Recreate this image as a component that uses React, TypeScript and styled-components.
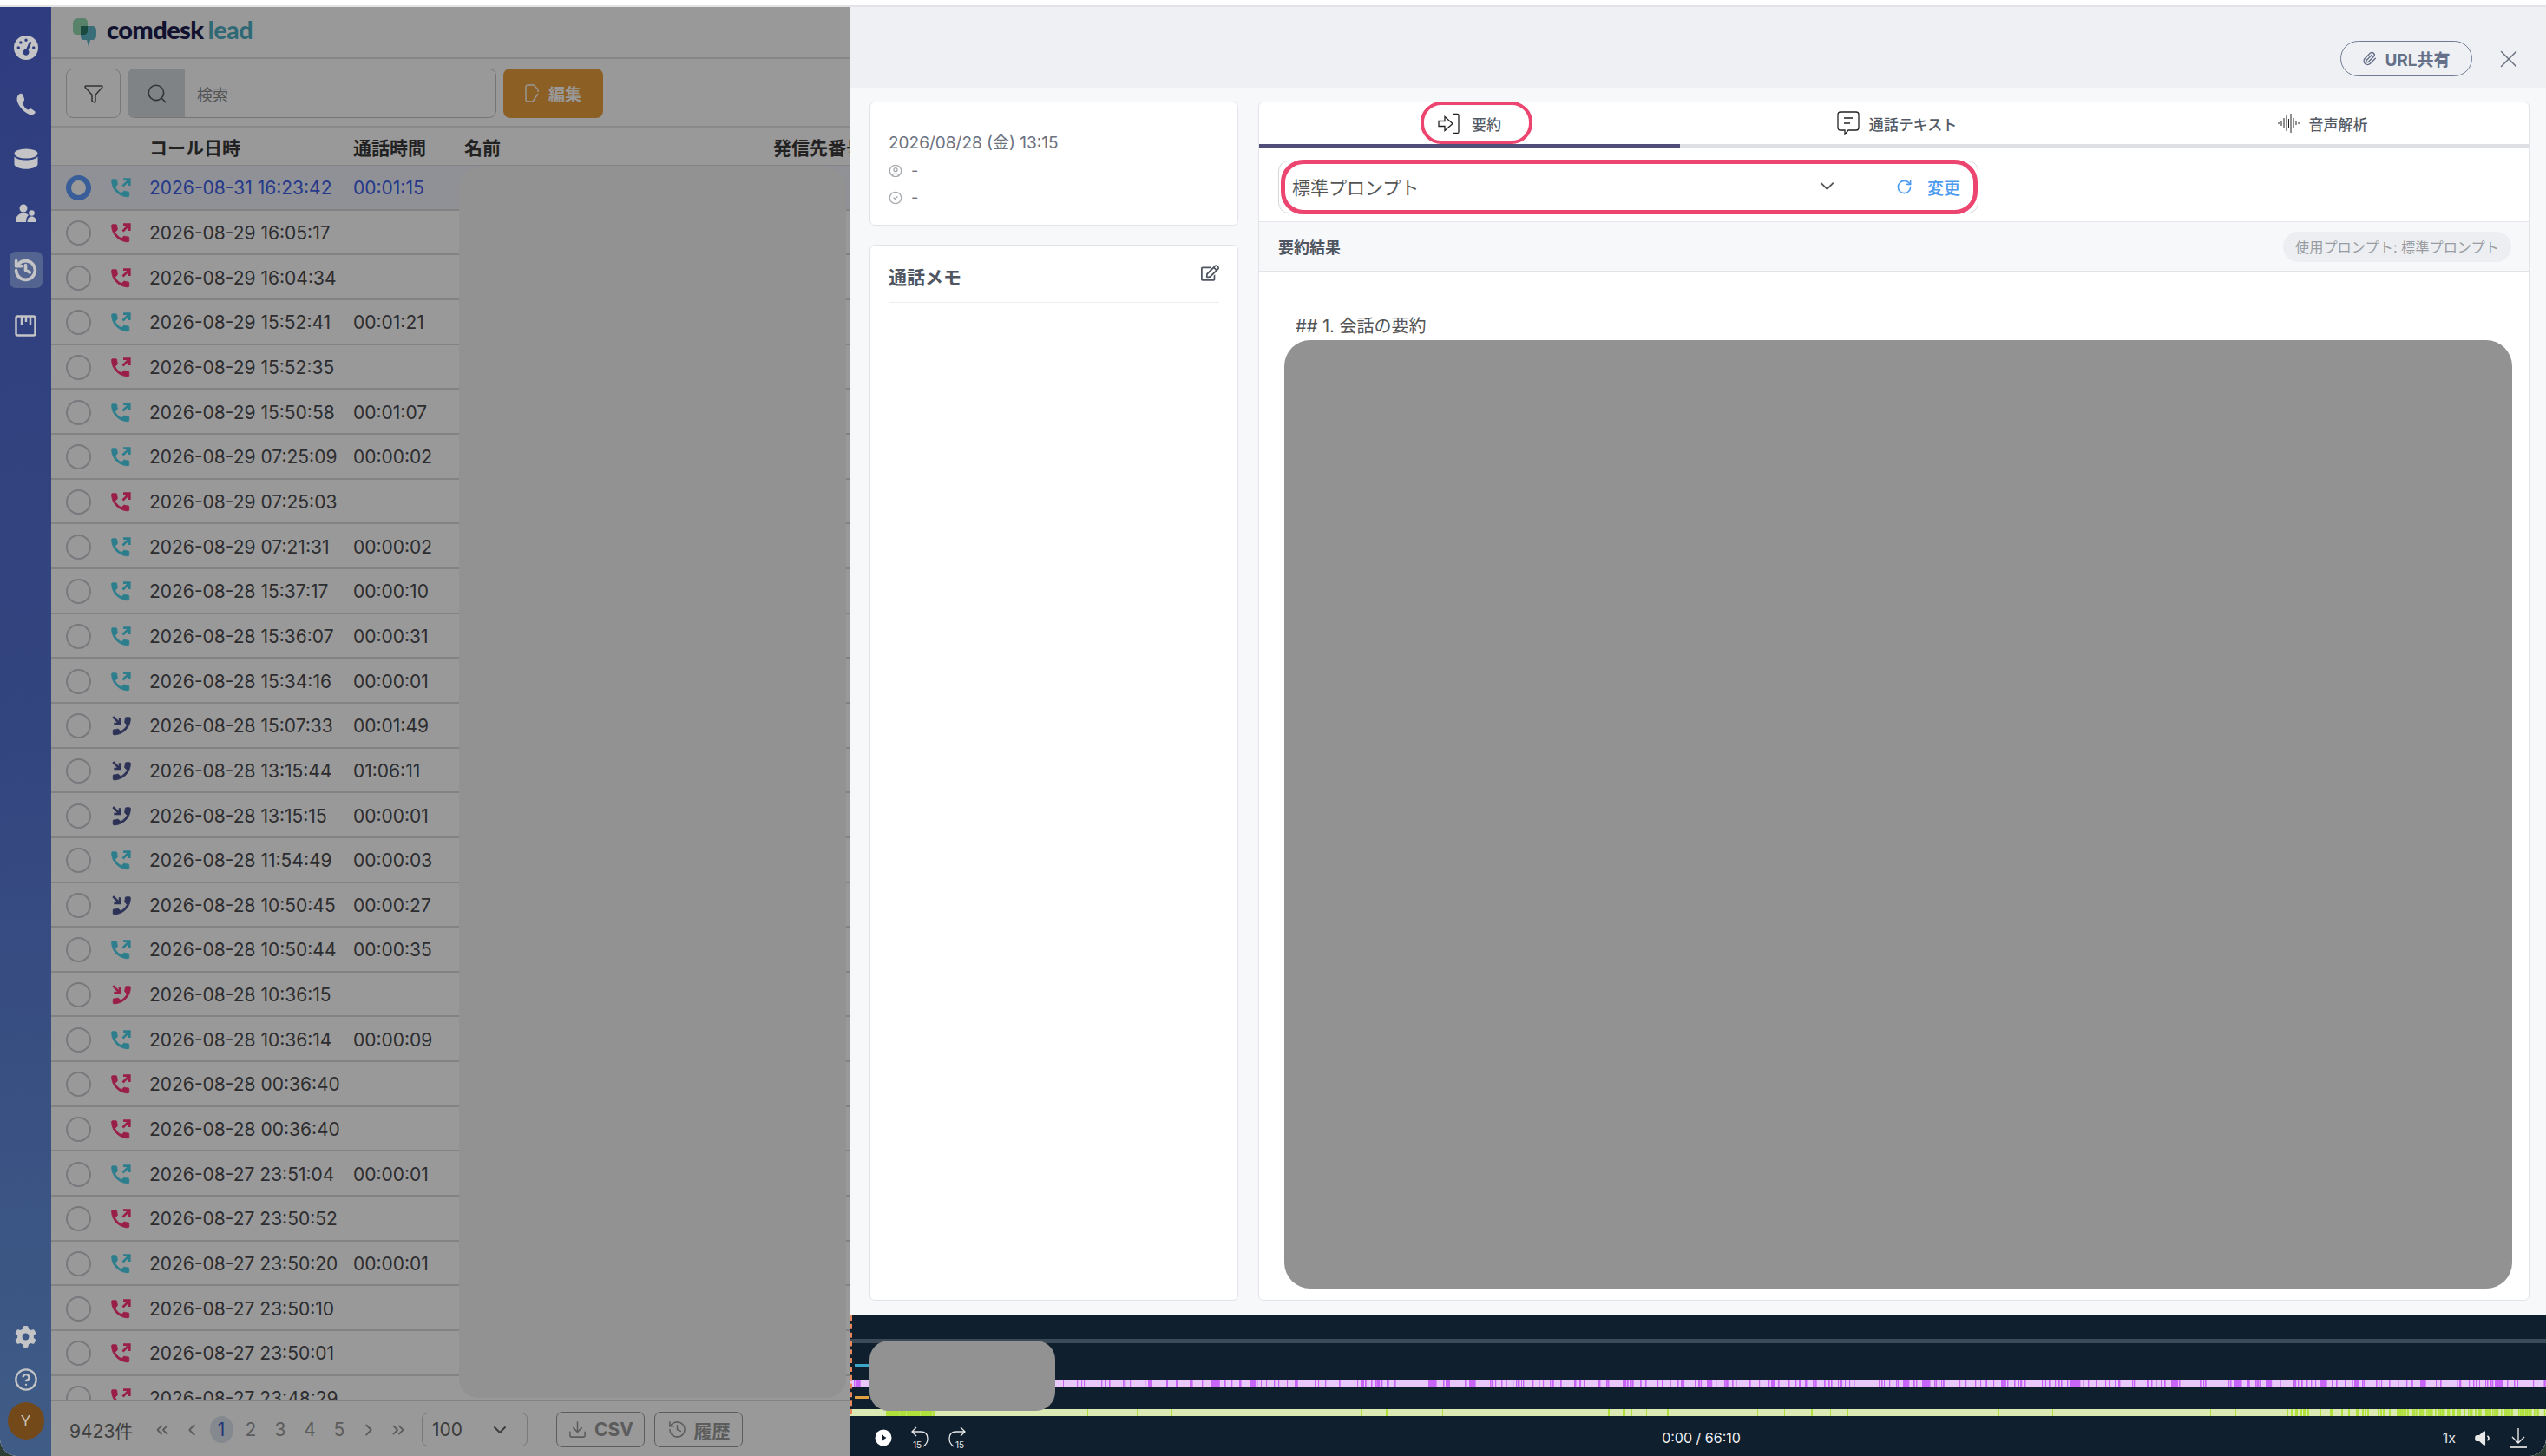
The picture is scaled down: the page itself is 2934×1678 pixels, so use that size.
import React from 'react';
import styled, { createGlobalStyle } from 'styled-components';
import {
  ChevronDown,
  ChevronLeft,
  ChevronRight,
  ChevronsLeft,
  ChevronsRight,
  CircleCheck,
  CircleHelp,
  CircleUser,
  Download,
  Filter,
  History,
  Paperclip,
  RotateCw,
  Search,
  X,
} from 'lucide-react';
import { FaGaugeHigh, FaGear, FaVolumeLow } from 'react-icons/fa6';
import { FaRegEdit } from 'react-icons/fa';

const FONT = `Inter, "Noto Sans CJK JP", sans-serif`;

const GlobalStyle = createGlobalStyle`
  html, body { margin: 0; padding: 0; background: #2e3f36; }
  body { font-family: ${FONT}; }
  * { box-sizing: border-box; }
`;

const Page = styled.div`
  width: 2934px;
  height: 1678px;
  display: flex;
  flex-direction: column;
  overflow: hidden;
  border-radius: 0 0 20px 20px;
  background: #fff;
`;

const TopStrip = styled.div`
  height: 8px;
  flex: none;
  background: #fff;
  border-bottom: 2px solid #e2e3e5;
`;

const Body = styled.div`
  flex: 1;
  display: flex;
  min-height: 0;
`;

/* sidebar */
const Sidebar = styled.nav`
  width: 59px;
  flex: none;
  display: flex;
  flex-direction: column;
  align-items: center;
  padding-top: 26px;
  padding-bottom: 19px;
  background: linear-gradient(180deg, #2f3d80 0%, #33457f 50%, #3f5c86 100%);
  color: #c4c4c6;
`;

const NavItem = styled.div<{ $active?: boolean }>`
  width: 38px;
  height: 42px;
  margin-bottom: 22px;
  display: flex;
  align-items: center;
  justify-content: center;
  border-radius: 7px;
  background: ${(p) => (p.$active ? '#52648f' : 'transparent')};
`;

const NavSpacer = styled.div`
  flex: 1;
`;

const BottomNavItem = styled.div`
  height: 49px;
  display: flex;
  align-items: center;
  justify-content: center;
`;

const Avatar = styled.div`
  width: 42px;
  height: 43px;
  margin-top: 2px;
  border-radius: 50%;
  background: #74491a;
  color: #c8c0b0;
  font-size: 17px;
  display: flex;
  align-items: center;
  justify-content: center;
`;

/* list pane */
const ListPane = styled.section`
  width: 921px;
  flex: none;
  position: relative;
  display: flex;
  flex-direction: column;
  overflow: hidden;
  background: #fff;
`;

const Dim = styled.div`
  position: absolute;
  inset: 0;
  z-index: 1;
  background: rgba(0, 0, 0, 0.4);
`;

const LogoBar = styled.header`
  height: 60px;
  flex: none;
  display: flex;
  align-items: center;
  padding: 0 0 8px 23px;
  gap: 11px;
  border-bottom: 2px solid #e2e2e2;
  svg { margin-top: 8px; }
`;

const LogoText = styled.div`
  font-family: Lato, ${FONT};
  font-size: 29px;
  font-weight: 900;
  letter-spacing: -0.6px;
  color: #1e1e4e;
  display: flex;
  gap: 5px;
`;

const LogoLead = styled.span`
  color: #4fb0c4;
  font-weight: 700;
`;

const Toolbar = styled.div`
  height: 80px;
  flex: none;
  display: flex;
  align-items: flex-start;
  gap: 8px;
  padding: 11px 0 0 17px;
  border-bottom: 3px solid #e6e6e6;
`;

const FilterButton = styled.div`
  width: 63px;
  height: 57px;
  border: 1px solid #c8c8c8;
  border-radius: 8px;
  display: flex;
  align-items: center;
  justify-content: center;
  color: #555;
`;

const SearchBox = styled.div`
  width: 425px;
  height: 57px;
  border: 1px solid #c4c4c4;
  border-radius: 8px;
  display: flex;
  overflow: hidden;
`;

const SearchPrefix = styled.div`
  width: 65px;
  background: #d6dbe0;
  display: flex;
  align-items: center;
  justify-content: center;
  color: #555;
`;

const SearchPlaceholder = styled.div`
  padding-left: 14px;
  display: flex;
  align-items: center;
  font-size: 18px;
  color: #8a8a8a;
`;

const EditButton = styled.div`
  width: 115px;
  height: 57px;
  border-radius: 8px;
  background: #ea9f3f;
  color: #fff;
  display: flex;
  align-items: center;
  justify-content: center;
  gap: 10px;
  font-size: 19px;
  font-weight: 700;
`;

const gridColumns = '69px 44px 235px 128px 356px 1fr';

const HeaderRow = styled.div`
  height: 43px;
  flex: none;
  display: grid;
  grid-template-columns: ${gridColumns};
  align-items: center;
  font-size: 21px;
  font-weight: 700;
  color: #3a3a3a;
  white-space: nowrap;
  border-bottom: 1px solid #dcdcdc;
`;

const ListBody = styled.div`
  flex: 1;
  position: relative;
  overflow: hidden;
  min-height: 0;
`;

const Row = styled.div<{ $selected?: boolean }>`
  height: 51.67px;
  padding-top: 2px;
  display: grid;
  grid-template-columns: ${gridColumns};
  align-items: center;
  font-size: 21px;
  white-space: nowrap;
  color: ${(p) => (p.$selected ? '#4060e6' : '#4c4c50')};
  background: ${(p) => (p.$selected ? '#eef2fa' : '#fff')};
  border-bottom: 2px solid #dadada;
`;

const Radio = styled.div<{ $selected?: boolean }>`
  margin-left: 17px;
  width: 29px;
  height: 29px;
  border-radius: 50%;
  border: ${(p) => (p.$selected ? '6px solid #5f9cff' : '2px solid #c8cad0')};
  background: #fff;
`;

const Redacted = styled.div`
  position: absolute;
  z-index: 2;
  left: 470px;
  top: 2px;
  bottom: 2px;
  width: 446px;
  border-radius: 22px;
  background: #929292;
`;

const ListFooter = styled.footer`
  height: 65px;
  flex: none;
  display: flex;
  align-items: center;
  padding: 2px 0 0 21px;
  border-top: 2px solid #dadada;
  color: #6f6f6f;
  font-size: 21px;
`;

const TotalCount = styled.div`
  width: 90px;
  color: #6a6a6a;
`;

const Pager = styled.div`
  display: flex;
  align-items: center;
  width: 316px;
`;

const PageCell = styled.div`
  width: 34px;
  height: 34px;
  display: flex;
  align-items: center;
  justify-content: center;
  color: #999;
  font-size: 21px;
`;

const CurrentPage = styled.span`
  width: 27px;
  height: 31px;
  display: flex;
  align-items: center;
  justify-content: center;
  border-radius: 50%;
  background: #dde3ef;
  color: #3a5cc8;
`;

const PageSize = styled.div`
  width: 122px;
  height: 39px;
  border: 1px solid #c8c8d0;
  border-radius: 7px;
  display: flex;
  align-items: center;
  justify-content: space-between;
  padding: 0 19px 0 11px;
  color: #666;
  font-size: 21px;
  margin-right: 33px;
`;

const FooterButton = styled.div`
  height: 41px;
  width: 102px;
  border: 1px solid #9a9a9a;
  border-radius: 7px;
  margin-right: 11px;
  display: flex;
  align-items: center;
  justify-content: center;
  gap: 8px;
  color: #999;
  font-size: 21px;
  font-weight: 700;
`;

/* drawer */
const Drawer = styled.section`
  flex: 1;
  display: flex;
  flex-direction: column;
  min-width: 0;
  background: #f7f8fa;
`;

const DrawerHeader = styled.div`
  height: 93px;
  flex: none;
  background: #eff0f4;
  display: flex;
  justify-content: flex-end;
  align-items: flex-start;
  padding: 39px 26px 0 0;
  gap: 25px;
`;

const ShareButton = styled.div`
  width: 152px;
  height: 41px;
  border: 1.5px solid #6f7b96;
  border-radius: 21px;
  display: flex;
  align-items: center;
  justify-content: center;
  gap: 9px;
  color: #667189;
  font-size: 19px;
  font-weight: 700;
`;

const CloseButton = styled.div`
  height: 41px;
  display: flex;
  align-items: center;
  color: #6b7280;
`;

const DrawerContent = styled.div`
  flex: 1;
  min-height: 0;
  display: grid;
  grid-template-columns: 425px 1465px;
  column-gap: 23px;
  padding: 16px 0 17px 22px;
`;

const LeftColumn = styled.div`
  display: flex;
  flex-direction: column;
  gap: 22px;
  min-height: 0;
`;

const Card = styled.div`
  background: #fff;
  border: 1px solid #e2e4e9;
  border-radius: 6px;
`;

const MetaCard = styled(Card)`
  height: 143px;
  flex: none;
  padding: 33px 21px 0;
  color: #6b7280;
`;

const MetaDate = styled.div`
  font-size: 19px;
  line-height: 28px;
  margin-bottom: 2px;
  white-space: nowrap;
`;

const MetaLine = styled.div`
  display: flex;
  align-items: center;
  gap: 10px;
  height: 31px;
  font-size: 18px;
  color: #70757f;
  svg { color: #a8abb0; }
`;

const MemoCard = styled(Card)`
  flex: 1;
  padding: 0 21px;
`;

const MemoHead = styled.div`
  height: 66px;
  display: flex;
  justify-content: space-between;
  padding-top: 21px;
  border-bottom: 1px solid #eceef1;
  color: #4f5661;
`;

const MemoTitle = styled.div`
  font-size: 21px;
  font-weight: 700;
  line-height: 32px;
`;

const SummaryCard = styled(Card)`
  display: flex;
  flex-direction: column;
  min-height: 0;
  overflow: hidden;
`;

const TabBar = styled.div`
  display: flex;
  flex: none;
`;

const Tab = styled.div<{ $active?: boolean; $width: number }>`
  width: ${(p) => p.$width}px;
  flex: none;
  height: 52px;
  display: flex;
  align-items: center;
  justify-content: center;
  border-bottom: 4px solid ${(p) => (p.$active ? '#504d78' : '#dfe0e5')};
`;

const TabLabel = styled.div`
  position: relative;
  display: flex;
  align-items: center;
  gap: 11px;
  font-size: 17px;
  font-weight: 500;
  color: #555b66;
`;

const TabHighlight = styled.div`
  position: absolute;
  top: -13px;
  bottom: -11px;
  left: -20px;
  right: -36px;
  border: 4.5px solid #ec4670;
  border-radius: 24px;
`;

const PromptRow = styled.div`
  height: 86px;
  flex: none;
  padding: 15px 22px 10px;
  border-bottom: 1px solid #e4e6ea;
  background: #fff;
`;

const PromptControl = styled.div`
  position: relative;
  width: 807px;
  height: 61px;
  display: flex;
  border: 1px solid #d6d7da;
  border-radius: 12px;
`;

const PromptSelect = styled.div`
  width: 663px;
  display: flex;
  align-items: center;
  justify-content: space-between;
  padding: 0 17px 2px 15px;
  border-right: 1px solid #d6d7da;
  font-size: 21px;
  color: #555;
`;

const PromptApply = styled.div`
  flex: 1;
  display: flex;
  align-items: center;
  justify-content: flex-end;
  gap: 17px;
  padding-right: 20px;
  font-size: 19px;
  font-weight: 500;
  color: #4a9af0;
`;

const PromptHighlight = styled.div`
  position: absolute;
  inset: -2px 0 -2px 2px;
  border: 5px solid #ec4670;
  border-radius: 26px;
`;

const ResultHeader = styled.div`
  height: 57px;
  flex: none;
  padding: 0 20px 0 22px;
  display: flex;
  align-items: center;
  justify-content: space-between;
  background: #f7f8fa;
  border-bottom: 1px solid #e2e4e9;
`;

const ResultTitle = styled.div`
  font-size: 18px;
  font-weight: 700;
  color: #4f5661;
`;

const PromptChip = styled.div`
  height: 35px;
  width: 263px;
  border-radius: 18px;
  background: #eceef1;
  color: #999da3;
  font-size: 16.2px;
  display: flex;
  align-items: center;
  justify-content: center;
  white-space: nowrap;
`;

const ResultBody = styled.div`
  flex: 1;
  min-height: 0;
  padding: 48px 0 13px 29px;
  display: flex;
  flex-direction: column;
`;

const ResultLine = styled.div`
  padding-left: 13px;
  font-size: 20px;
  line-height: 30px;
  height: 31px;
  color: #555;
`;

const RedactedText = styled.div`
  flex: 1;
  width: 1415px;
  border-radius: 30px;
  background: #929292;
`;

/* player */
const Player = styled.div`
  position: relative;
  height: 162px;
  flex: none;
  padding-top: 27px;
  display: flex;
  flex-direction: column;
  background: #0f1f2e;
`;

const ProgressLine = styled.div`
  height: 5px;
  background: #3d4a57;
  margin-bottom: 42px;
`;

const Track = styled.svg`
  display: block;
  width: 100%;
  height: 8px;
  flex: none;
`;

const TrackGap = styled.div`
  height: 26px;
  flex: none;
`;

const Playhead = styled.div`
  position: absolute;
  left: 0;
  top: 0;
  height: 114px;
  border-left: 2px dashed #e8875a;
`;

const Marker = styled.div<{ $color: string; $top: number }>`
  position: absolute;
  left: 5px;
  top: ${(p) => p.$top}px;
  width: 16px;
  height: 3px;
  background: ${(p) => p.$color};
`;

const SpeakerBox = styled.div`
  position: absolute;
  left: 22px;
  top: 29px;
  width: 214px;
  height: 81px;
  border-radius: 22px;
  background: #929292;
`;

const Controls = styled.div`
  flex: 1;
  display: grid;
  grid-template-columns: 1fr auto 1fr;
  align-items: center;
  padding: 4px 21px 0 28px;
  color: #e8e8e8;
`;

const ControlGroup = styled.div<{ $end?: boolean }>`
  display: flex;
  align-items: center;
  gap: 21px;
  justify-content: ${(p) => (p.$end ? 'flex-end' : 'flex-start')};
`;

const TimeText = styled.div`
  font-size: 16px;
  color: #f0f0f0;
  white-space: nowrap;
`;

const SpeedText = styled.div`
  font-size: 16px;
  color: #e0e0e0;
`;

type Kind = 'ok' | 'miss' | 'in' | 'inMiss';

const rows: [string, string, Kind][] = [
  ['2026-08-31 16:23:42', '00:01:15', 'ok'],
  ['2026-08-29 16:05:17', '', 'miss'],
  ['2026-08-29 16:04:34', '', 'miss'],
  ['2026-08-29 15:52:41', '00:01:21', 'ok'],
  ['2026-08-29 15:52:35', '', 'miss'],
  ['2026-08-29 15:50:58', '00:01:07', 'ok'],
  ['2026-08-29 07:25:09', '00:00:02', 'ok'],
  ['2026-08-29 07:25:03', '', 'miss'],
  ['2026-08-29 07:21:31', '00:00:02', 'ok'],
  ['2026-08-28 15:37:17', '00:00:10', 'ok'],
  ['2026-08-28 15:36:07', '00:00:31', 'ok'],
  ['2026-08-28 15:34:16', '00:00:01', 'ok'],
  ['2026-08-28 15:07:33', '00:01:49', 'in'],
  ['2026-08-28 13:15:44', '01:06:11', 'in'],
  ['2026-08-28 13:15:15', '00:00:01', 'in'],
  ['2026-08-28 11:54:49', '00:00:03', 'ok'],
  ['2026-08-28 10:50:45', '00:00:27', 'in'],
  ['2026-08-28 10:50:44', '00:00:35', 'ok'],
  ['2026-08-28 10:36:15', '', 'inMiss'],
  ['2026-08-28 10:36:14', '00:00:09', 'ok'],
  ['2026-08-28 00:36:40', '', 'miss'],
  ['2026-08-28 00:36:40', '', 'miss'],
  ['2026-08-27 23:51:04', '00:00:01', 'ok'],
  ['2026-08-27 23:50:52', '', 'miss'],
  ['2026-08-27 23:50:20', '00:00:01', 'ok'],
  ['2026-08-27 23:50:10', '', 'miss'],
  ['2026-08-27 23:50:01', '', 'miss'],
  ['2026-08-27 23:48:29', '', 'miss'],
];

const handset =
  'M6.6 10.8c1.4 2.8 3.8 5.1 6.6 6.6l2.2-2.2c.3-.3.7-.4 1-.2 1.1.4 2.3.6 3.6.6.5 0 1 .4 1 1V20c0 .5-.5 1-1 1C10.6 21 3 13.4 3 4c0-.5.5-1 1-1h3.5c.6 0 1 .5 1 1 0 1.3.2 2.5.6 3.6.1.3 0 .7-.3 1z';

const kindColor: Record<Kind, string> = {
  ok: '#4cd2ec',
  miss: '#ff3278',
  in: '#4a5290',
  inMiss: '#ff3278',
};

const CallIcon = ({ kind }: { kind: Kind }) => {
  const color = kindColor[kind];
  const incoming = kind === 'in' || kind === 'inMiss';
  return (
    <svg
      width="23"
      height="23"
      viewBox="2.5 1.5 20.5 20.5"
      style={incoming ? { transform: 'scaleX(-1)' } : undefined}
    >
      <path d={handset} fill={color} stroke={color} strokeWidth="0.7" />
      {incoming ? (
        <path d="M14 3.5V9.5H20M14 9.5L21 2.5" fill="none" stroke={color} strokeWidth="2.4" />
      ) : (
        <path d="M15 3H21.5V9.5M21.5 3L14.5 10" fill="none" stroke={color} strokeWidth="2.4" />
      )}
    </svg>
  );
};

const LogoMark = () => (
  <svg width="30" height="33" viewBox="0 0 30 33">
    <path d="M2 6C2 2 5 0 9 0h5c3 0 5 2 5 5v10c0 2-2 4-4 4H7C4 19 2 17 2 14z" fill="#6fcf97" opacity="0.75" />
    <path d="M11 9h13c3 0 5 2 5 5v6c0 3-2 5-5 5h-2l-2 8-2-8h-3c-3 0-4-2-4-5z" fill="#4fb0c4" opacity="0.9" />
    <path d="M11 9h8v6c0 2-2 4-4 4h-4z" fill="#2a7a6a" />
  </svg>
);

const DatabaseIcon = () => (
  <svg width="28" height="24" viewBox="0 0 28 24" fill="currentColor">
    <ellipse cx="14" cy="6" rx="13.500" ry="5.500" />
    <path d="M0.500 9.500C3 12.500 8 13.500 14 13.500S25 12.500 27.500 9.500V18c0 3.200-6 5.800-13.500 5.800S0.500 21.200 0.500 18z" />
  </svg>
);

const PeopleIcon = () => (
  <svg width="26" height="24" viewBox="0 0 26 24" fill="currentColor">
    <circle cx="10" cy="5" r="4.500" />
    <path d="M1 21C1 14 5 10.500 10 10.500c2.500 0 4.500 1 6 2.500-2 1.500-3 4-3 8z" />
    <circle cx="19.500" cy="10.500" r="3.300" />
    <path d="M14.500 21c0-4 2-6.500 5-6.500s5.500 2.500 5.500 6.500z" />
  </svg>
);

const KanbanIcon = () => (
  <svg width="25" height="25" viewBox="0 0 25 25" fill="none" stroke="currentColor" strokeWidth="2.500">
    <rect x="1.500" y="1.500" width="22" height="22" rx="2" />
    <path d="M8 2v10M13 2v6M18 2v10" />
  </svg>
);

const PhoneNavIcon = () => (
  <svg width="24" height="26" viewBox="0 0 24 26" fill="currentColor">
    <path d="M5 2c2-1 3 0 4 3l1 3c.3 1 0 2-1 3-1 .8-1 1.500-.5 3 1 2.500 2.500 4.500 4.500 6 1 .7 1.700.6 2.500 0 1-.7 2-.9 3-.3l3 2c1.500 1 1.500 2 .5 3-1.500 1.500-4 2-6.500 1C9 23 4 17 2 11 .8 7 2 3.500 5 2z" />
  </svg>
);

const SummaryTabIcon = () => (
  <svg width="28" height="25" viewBox="0 0 28 25" fill="none" stroke="#222" strokeWidth="1.300">
    <path d="M1 9.500H8V4.500L17 12.500L8 20.500V15.500H1z" />
    <path d="M17 1.500H22.500C23.500 1.500 24 2 24 3V22C24 23 23.500 23.500 22.500 23.500H17" />
  </svg>
);

const TextTabIcon = () => (
  <svg width="26" height="28" viewBox="0 0 26 28" fill="none" stroke="#222" strokeWidth="1.300">
    <path d="M4 1H22C24 1 25 2 25 4V19C25 21 24 22 22 22H13L9 27V22H4C2 22 1 21 1 19V4C1 2 2 1 4 1z" />
    <path d="M8 8H18M8 14H15" />
  </svg>
);

const WaveIcon = () => (
  <svg width="26" height="24" viewBox="0 0 26 24" stroke="#222" strokeWidth="1">
    <path d="M1 12h2M5 9v6M8 6v12M11 3v18M13.500 7v10M16 1v22M19 6v12M22 10v4M24 12h2" fill="none" />
  </svg>
);

const SkipIcon = ({ forward }: { forward?: boolean }) => (
  <svg width="22" height="26" viewBox="0 0 22 26" fill="none" stroke="#e8e8e8" strokeWidth="1.300">
    <g style={forward ? { transform: 'scaleX(-1)', transformOrigin: '11px 13px' } : undefined}>
      <path d="M7 1L2 6L7 11M2 6H12C17 6 20 9 20 14C20 18 18 21 15 23" />
    </g>
    <text
      x={forward ? 14 : 8}
      y="25"
      textAnchor="middle"
      fontSize="10"
      fill="#e8e8e8"
      stroke="none"
      fontFamily="Inter, sans-serif"
    >
      15
    </text>
  </svg>
);

const PlayIcon = () => (
  <svg width="20" height="20" viewBox="0 0 20 20">
    <circle cx="10" cy="10" r="9.500" fill="#fff" />
    <path d="M8 6.500L13.500 10L8 13.500z" fill="#0f1f2e" />
  </svg>
);

// seeded so the wave form stays the same between runs
const makeSegments = (count: number, seed: number) => {
  let s = seed;
  const next = () => {
    s = (s * 16807) % 2147483647;
    return (s - 1) / 2147483646;
  };
  const out: { x: number; w: number }[] = [];
  for (let i = 0; i < count; i++) {
    const big = next() > 0.93;
    out.push({ x: Math.floor(next() * 1954), w: big ? 3 + next() * 7 : 1 + next() * 0.8 });
  }
  return out;
};

const purpleSegments = makeSegments(340, 48271);
const greenDense = makeSegments(240, 91).map((d) => ({
  x: d.x % 2 === 0 ? 1784 + (d.x % 170) : 41 + (d.x % 55),
  w: Math.min(d.w, 3),
}));
const greenMid = makeSegments(26, 17).map((d) => ({ x: 1655 + (d.x % 130), w: 2 }));
const greenSparse = [
  [37, 1],
  [47, 2],
  [53, 1],
  [273, 1],
  [330, 1],
  [370, 1],
  [392, 1],
  [588, 1],
  [617, 2],
  [682, 1],
  [873, 2],
  [890, 3],
  [900, 1],
  [917, 1],
  [941, 2],
  [1045, 1],
  [1076, 1],
  [1107, 2],
  [1129, 1],
  [1149, 1],
  [1156, 1],
  [1323, 1],
  [1385, 1],
  [1413, 1],
  [1567, 1],
  [1596, 1],
].map(([x, w]) => ({ x, w }));

const TrackBar = ({ base, mark, segments }: { base: string; mark: string; segments: { x: number; w: number }[] }) => (
  <Track viewBox="0 0 1954 8" preserveAspectRatio="none">
    <rect x="0" y="0" width="1954" height="8" fill={base} />
    {segments.map((s, i) => (
      <rect key={i} x={s.x} y="0" width={s.w} height="8" fill={mark} />
    ))}
  </Track>
);

const App = () => (
  <Page>
    <GlobalStyle />
    <TopStrip />
    <Body>
      <Sidebar>
        <NavItem>
          <FaGaugeHigh size={28} />
        </NavItem>
        <NavItem>
          <PhoneNavIcon />
        </NavItem>
        <NavItem>
          <DatabaseIcon />
        </NavItem>
        <NavItem>
          <PeopleIcon />
        </NavItem>
        <NavItem $active>
          <History size={29} strokeWidth={3} />
        </NavItem>
        <NavItem>
          <KanbanIcon />
        </NavItem>
        <NavSpacer />
        <BottomNavItem>
          <FaGear size={25} />
        </BottomNavItem>
        <BottomNavItem>
          <CircleHelp size={28} strokeWidth={2} />
        </BottomNavItem>
        <Avatar>Y</Avatar>
      </Sidebar>

      <ListPane>
        <LogoBar>
          <LogoMark />
          <LogoText>
            <span>comdesk</span>
            <LogoLead>lead</LogoLead>
          </LogoText>
        </LogoBar>
        <Toolbar>
          <FilterButton>
            <Filter size={24} strokeWidth={1.5} />
          </FilterButton>
          <SearchBox>
            <SearchPrefix>
              <Search size={26} strokeWidth={1.5} />
            </SearchPrefix>
            <SearchPlaceholder>検索</SearchPlaceholder>
          </SearchBox>
          <EditButton>
            <svg width="17" height="22" viewBox="0 0 17 22" fill="none" stroke="#fff" strokeWidth="1.400">
              <path d="M9 20H3C2 20 1 19 1 18V3C1 2 2 1 3 1H10L15 6V9M15 11L9 20" />
            </svg>
            編集
          </EditButton>
        </Toolbar>
        <HeaderRow>
          <span />
          <span />
          <span>コール日時</span>
          <span>通話時間</span>
          <span>名前</span>
          <span>発信先番号</span>
        </HeaderRow>
        <ListBody>
          {rows.map(([date, duration, kind], i) => (
            <Row key={i} $selected={i === 0}>
              <Radio $selected={i === 0} />
              <CallIcon kind={kind} />
              <span>{date}</span>
              <span>{duration}</span>
            </Row>
          ))}
          <Redacted />
        </ListBody>
        <ListFooter>
          <TotalCount>9423件</TotalCount>
          <Pager>
            <PageCell>
              <ChevronsLeft size={22} />
            </PageCell>
            <PageCell>
              <ChevronLeft size={22} />
            </PageCell>
            <PageCell>
              <CurrentPage>1</CurrentPage>
            </PageCell>
            <PageCell>2</PageCell>
            <PageCell>3</PageCell>
            <PageCell>4</PageCell>
            <PageCell>5</PageCell>
            <PageCell>
              <ChevronRight size={22} />
            </PageCell>
            <PageCell>
              <ChevronsRight size={22} />
            </PageCell>
          </Pager>
          <PageSize>
            100
            <ChevronDown size={24} />
          </PageSize>
          <FooterButton>
            <Download size={23} strokeWidth={1.6} />
            CSV
          </FooterButton>
          <FooterButton>
            <History size={23} strokeWidth={1.6} />
            履歴
          </FooterButton>
        </ListFooter>
        <Dim />
      </ListPane>

      <Drawer>
        <DrawerHeader>
          <ShareButton>
            <Paperclip size={17} />
            URL共有
          </ShareButton>
          <CloseButton>
            <X size={34} strokeWidth={1.1} />
          </CloseButton>
        </DrawerHeader>
        <DrawerContent>
          <LeftColumn>
            <MetaCard>
              <MetaDate>2026/08/28 (金) 13:15</MetaDate>
              <MetaLine>
                <CircleUser size={16} />-
              </MetaLine>
              <MetaLine>
                <CircleCheck size={16} />-
              </MetaLine>
            </MetaCard>
            <MemoCard>
              <MemoHead>
                <MemoTitle>通話メモ</MemoTitle>
                <FaRegEdit size={21} />
              </MemoHead>
            </MemoCard>
          </LeftColumn>
          <SummaryCard>
            <TabBar>
              <Tab $active $width={485}>
                <TabLabel>
                  <SummaryTabIcon />
                  要約
                  <TabHighlight />
                </TabLabel>
              </Tab>
              <Tab $width={500}>
                <TabLabel>
                  <TextTabIcon />
                  通話テキスト
                </TabLabel>
              </Tab>
              <Tab $width={480}>
                <TabLabel>
                  <WaveIcon />
                  音声解析
                </TabLabel>
              </Tab>
            </TabBar>
            <PromptRow>
              <PromptControl>
                <PromptSelect>
                  標準プロンプト
                  <ChevronDown size={27} strokeWidth={1.6} color="#555" />
                </PromptSelect>
                <PromptApply>
                  <RotateCw size={19} />
                  変更
                </PromptApply>
                <PromptHighlight />
              </PromptControl>
            </PromptRow>
            <ResultHeader>
              <ResultTitle>要約結果</ResultTitle>
              <PromptChip>使用プロンプト: 標準プロンプト</PromptChip>
            </ResultHeader>
            <ResultBody>
              <ResultLine>## 1. 会話の要約</ResultLine>
              <RedactedText />
            </ResultBody>
          </SummaryCard>
        </DrawerContent>
        <Player>
          <ProgressLine />
          <TrackBar base="#e8c8f8" mark="#c964f8" segments={purpleSegments} />
          <TrackGap />
          <TrackBar base="#dbe9b4" mark="#afe03c" segments={[...greenDense, ...greenMid, ...greenSparse]} />
          <Playhead />
          <Marker $color="#3ba8c8" $top={56} />
          <Marker $color="#e0a040" $top={93} />
          <SpeakerBox />
          <Controls>
            <ControlGroup>
              <PlayIcon />
              <SkipIcon />
              <SkipIcon forward />
            </ControlGroup>
            <TimeText>0:00 / 66:10</TimeText>
            <ControlGroup $end>
              <SpeedText>1x</SpeedText>
              <FaVolumeLow size={19} />
              <svg width="22" height="24" viewBox="0 0 22 24" fill="none" stroke="#e8e8e8" strokeWidth="1.400">
                <path d="M11 1V18M4 11L11 18L18 11" />
                <path d="M1 23H21" strokeWidth="2.400" stroke="#c8c8c8" />
              </svg>
            </ControlGroup>
          </Controls>
        </Player>
      </Drawer>
    </Body>
  </Page>
);

export default App;
